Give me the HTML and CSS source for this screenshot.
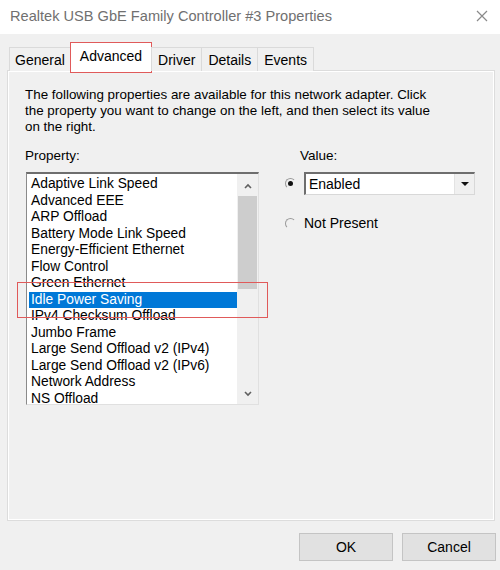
FILE: index.html
```html
<!DOCTYPE html>
<html lang="en">
<head>
<meta charset="UTF-8" />
<meta name="viewport" content="width=device-width, initial-scale=1.0" />
<title>Realtek USB GbE Family Controller #3 Properties</title>
<link rel="stylesheet" href="styles.css">
</head>
<body>
<div class="window">
  <!-- Title bar -->
  <header class="titlebar">
    <span class="title">Realtek USB GbE Family Controller #3 Properties</span>
    <svg class="close" width="12" height="12" viewBox="0 0 12 12">
      <path d="M1 1 L11 11 M11 1 L1 11" stroke="#8a8a8a" stroke-width="1.2" fill="none" />
    </svg>
  </header>

  <div class="dialog">
    <!-- Tabs -->
    <nav class="tabs">
      <div class="tab">General</div>
      <div class="tab active">Advanced</div>
      <div class="tab">Driver</div>
      <div class="tab">Details</div>
      <div class="tab">Events</div>
    </nav>

    <section class="panel">
      <p class="intro">The following properties are available for this network adapter. Click<br>
        the property you want to change on the left, and then select its value<br>
        on the right.</p>

      <div class="columns">
        <div class="property-col">
          <label class="field-label">Property:</label>
          <div class="listbox">
            <ul class="items">
              <li>Adaptive Link Speed</li>
              <li>Advanced EEE</li>
              <li>ARP Offload</li>
              <li>Battery Mode Link Speed</li>
              <li>Energy-Efficient Ethernet</li>
              <li>Flow Control</li>
              <li>Green Ethernet</li>
              <li class="selected">Idle Power Saving</li>
              <li>IPv4 Checksum Offload</li>
              <li>Jumbo Frame</li>
              <li>Large Send Offload v2 (IPv4)</li>
              <li>Large Send Offload v2 (IPv6)</li>
              <li>Network Address</li>
              <li>NS Offload</li>
            </ul>
            <div class="scrollbar">
              <svg class="arrow" width="10" height="8" viewBox="0 0 10 8">
                <path d="M2 6 L5 3 L8 6" stroke="#606060" stroke-width="1.6" fill="none" />
              </svg>
              <div class="thumb"></div>
              <div class="track"></div>
              <svg class="arrow" width="10" height="8" viewBox="0 0 10 8">
                <path d="M2 2 L5 5 L8 2" stroke="#606060" stroke-width="1.6" fill="none" />
              </svg>
            </div>
          </div>
          <div class="highlight"></div>
        </div>

        <div class="value-col">
          <label class="field-label value-label">Value:</label>
          <div class="value-row">
            <span class="radio checked"></span>
            <div class="select">
              <span class="select-text">Enabled</span>
              <span class="select-btn">
                <svg width="10" height="6" viewBox="0 0 10 6"><path d="M1 1 L9 1 L5 5 Z" fill="#111" /></svg>
              </span>
            </div>
          </div>
          <div class="value-row">
            <span class="radio"></span>
            <span class="radio-text">Not Present</span>
          </div>
        </div>
      </div>
    </section>

    <footer class="buttons">
      <button class="btn">OK</button>
      <button class="btn">Cancel</button>
    </footer>
  </div>
</div>
</body>
</html>
```

FILE: styles.css
```css
/* General Styling */
body {
  font-family: "Liberation Sans", Arial, sans-serif;
  margin: 0;
  padding: 0;
  background-color: #f0f0f0;
  color: #000;
}
.window {
  width: 500px;
  height: 570px;
  overflow: hidden;
}

/* Title bar */
.titlebar {
  height: 34px;
  background-color: #fff;
  display: flex;
  align-items: center;
  justify-content: space-between;
  padding: 0 12px 2px 10px;
  box-sizing: border-box;
}
.title {
  font-size: 14.6px;
  color: #707070;
}

.dialog {
  padding: 8px 4px 0 8px;
}

/* Tabs */
.tabs {
  display: flex;
  align-items: flex-end;
  height: 29px;
  margin-left: 2px;
  position: relative;
  z-index: 1;
}
.tab {
  height: 24px;
  line-height: 25px;
  padding: 0 6px;
  font-size: 14px;
  border: 1px solid #dadada;
  border-bottom: none;
  background-color: #f0f0f0;
  margin-left: -1px;
  box-sizing: border-box;
}
.tab:first-child {
  padding: 0 5px;
}
.tab.active {
  height: 31px;
  line-height: 26px;
  padding: 0 9px;
  background-color: #fff;
  border: 1px solid #e05a5a;
  margin-bottom: -2px;
}

/* Panel */
.panel {
  height: 449px;
  border: 1px solid #fff;
  outline: 1px solid #dcdcdc;
  padding: 0 16px;
  box-sizing: border-box;
  width: 486px;
}
.intro {
  font-size: 13.4px;
  line-height: 16px;
  margin: 15px 0 0 0;
  white-space: nowrap;
}
.columns {
  display: flex;
  margin-top: 13px;
}
.field-label {
  display: block;
  font-size: 13.5px;
  line-height: 16px;
  margin-bottom: 8px;
}

/* Property list */
.property-col {
  position: relative;
  width: 234px;
}
.listbox {
  display: flex;
  height: 233px;
  margin-left: 1px;
  background-color: #fff;
  border-top: 2px solid #6e6e6e;
  border-left: 1px solid #8a8a8a;
  border-right: 1px solid #e0e0e0;
  border-bottom: 1px solid #e0e0e0;
  box-sizing: border-box;
}
.items {
  list-style: none;
  margin: 2px 0 0 0;
  padding: 0 0 0 2px;
  flex: 1;
}
.items li {
  font-size: 13.8px;
  line-height: 16.5px;
  height: 16.5px;
  padding-left: 2px;
  white-space: nowrap;
}
.items li.selected {
  background-color: #0078d7;
  color: #fff;
}
.scrollbar {
  width: 21px;
  display: flex;
  flex-direction: column;
  align-items: center;
  background-color: #f0f0f0;
}
.scrollbar .arrow {
  margin: 8px 0 6px;
}
.thumb {
  width: 19px;
  height: 93px;
  background-color: #cdcdcd;
}
.track {
  flex: 1;
}
.highlight {
  position: absolute;
  left: -8px;
  top: 134px;
  width: 251px;
  height: 36px;
  border: 1px solid #e05a5a;
  box-sizing: border-box;
}

/* Value column */
.value-col {
  margin-left: 26px;
  width: 190px;
}
.value-label {
  margin-left: 15px;
}
.value-row {
  display: flex;
  align-items: center;
  margin-bottom: 20px;
}
.radio {
  width: 11px;
  height: 11px;
  border-radius: 50%;
  border: 1px solid #9a9a9a;
  border-right-color: #f0f0f0;
  border-bottom-color: #f0f0f0;
  box-sizing: border-box;
  margin-right: 8px;
  display: inline-flex;
  align-items: center;
  justify-content: center;
}
.radio.checked::after {
  content: "";
  width: 5px;
  height: 5px;
  border-radius: 50%;
  background-color: #111;
}
.radio-text {
  font-size: 14px;
}
.select {
  display: flex;
  width: 173px;
  height: 23px;
  background-color: #fff;
  border-top: 2px solid #6e6e6e;
  border-left: 2px solid #6e6e6e;
  border-right: 1px solid #d8d8d8;
  border-bottom: 1px solid #d8d8d8;
  box-sizing: border-box;
}
.select-text {
  flex: 1;
  font-size: 14px;
  line-height: 20px;
  padding-left: 3px;
}
.select-btn {
  width: 19px;
  background-color: #f0f0f0;
  border-left: 1px solid #e3e3e3;
  display: flex;
  align-items: center;
  justify-content: center;
}

/* Buttons */
.buttons {
  display: flex;
  justify-content: flex-end;
  gap: 9px;
  margin-top: 13px;
}
.btn {
  width: 94px;
  height: 28px;
  font-family: "Liberation Sans", Arial, sans-serif;
  font-size: 14px;
  background-color: #e1e1e1;
  border: 1px solid #c4c4c4;
  color: #000;
  padding: 0;
}
```
